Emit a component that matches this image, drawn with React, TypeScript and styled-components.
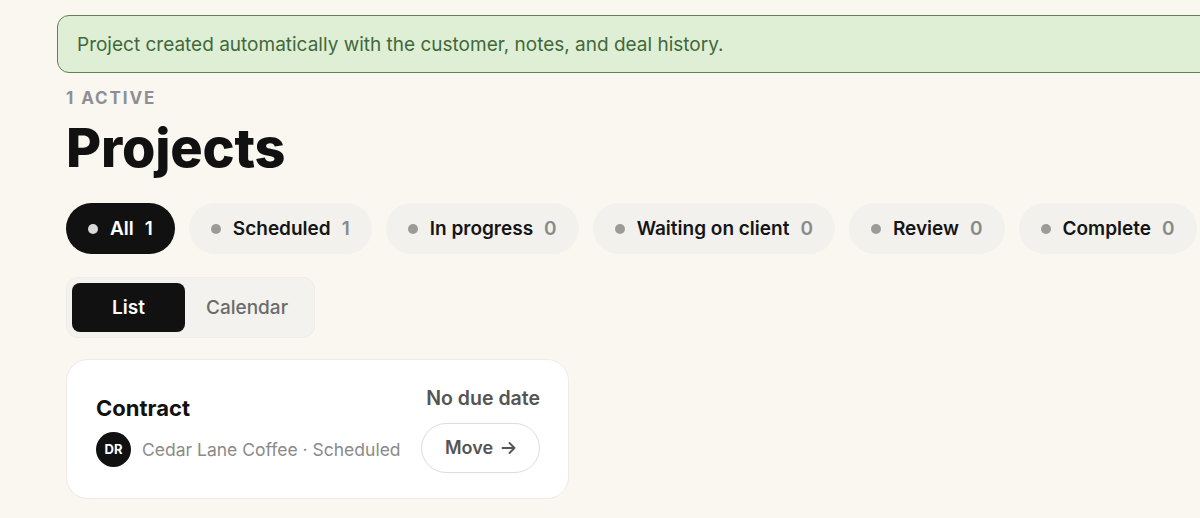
import React from "react";
import styled, { createGlobalStyle } from "styled-components";

const Global = createGlobalStyle`
  html, body { margin: 0; padding: 0; background: #faf7f1; overflow: hidden; }
  body { font-family: Inter, "Noto Sans", sans-serif; color: #111; }
  * { box-sizing: border-box; }
`;

const Page = styled.div`
  width: 1200px;
  height: 518px;
  overflow: hidden;
  background: #faf7f1;
`;

const Inner = styled.div`
  width: 1400px;
  padding: 15px 0 0 66px;
  display: flex;
  flex-direction: column;
`;

const Banner = styled.div`
  margin-left: -9px;
  width: 1220px;
  height: 58px;
  display: flex;
  align-items: center;
  padding-left: 19px;
  background: #deefd6;
  border: 1.5px solid #5f8355;
  border-radius: 12px;
  color: #42683a;
  font-size: 19px;
  font-weight: 400;
`;

const Eyebrow = styled.div`
  margin-top: 15px;
  font-size: 17px;
  font-weight: 700;
  letter-spacing: 1.9px;
  color: #8d8f95;
  text-transform: uppercase;
  line-height: 20px;
`;

const Title = styled.h1`
  margin: 8px 0 0;
  font-size: 54px;
  font-weight: 800;
  letter-spacing: -0.2px;
  line-height: 64px;
  color: #111;
`;

const Pills = styled.div`
  margin-top: 23px;
  display: flex;
  gap: 14px;
`;

const Pill = styled.div<{ $active?: boolean }>`
  flex: none;
  height: 51px;
  display: flex;
  align-items: center;
  padding: 0 22px;
  border-radius: 999px;
  background: ${(p) => (p.$active ? "#111" : "#f2f1ee")};
  color: ${(p) => (p.$active ? "#fff" : "#151515")};
  font-size: 19px;
  font-weight: 600;
`;

const Dot = styled.span<{ $active?: boolean }>`
  width: 10px;
  height: 10px;
  border-radius: 50%;
  background: ${(p) => (p.$active ? "#d9d9d9" : "#9b9b9b")};
  margin-right: 12px;
`;

const Count = styled.span<{ $active?: boolean }>`
  margin-left: 11px;
  color: ${(p) => (p.$active ? "#fff" : "#8a8a8a")};
  font-weight: 600;
`;

const Segment = styled.div`
  margin-top: 23px;
  align-self: flex-start;
  display: flex;
  padding: 5px;
  background: #f3f2ef;
  border: 1px solid #efede8;
  border-radius: 12px;
`;

const SegButton = styled.div<{ $active?: boolean }>`
  height: 49px;
  width: ${(p) => (p.$active ? "113px" : "124px")};
  display: flex;
  align-items: center;
  justify-content: center;
  border-radius: 8px;
  background: ${(p) => (p.$active ? "#111" : "transparent")};
  color: ${(p) => (p.$active ? "#fff" : "#6b6b6b")};
  font-size: 19px;
  font-weight: ${(p) => (p.$active ? 600 : 500)};
`;

const Card = styled.div`
  margin-top: 21px;
  align-self: flex-start;
  width: 503px;
  height: 140px;
  padding: 1px 28px 0 29px;
  display: flex;
  align-items: center;
  justify-content: space-between;
  background: #fff;
  border: 1px solid #efece6;
  border-radius: 22px;
`;

const Left = styled.div`
  display: flex;
  flex-direction: column;
  gap: 11px;
  padding-top: 2px;
`;

const CardTitle = styled.div`
  font-size: 22px;
  font-weight: 700;
  line-height: 26px;
  color: #111;
`;

const Meta = styled.div`
  display: flex;
  align-items: center;
  gap: 11px;
  color: #8a8a8a;
  font-size: 17.5px;
`;

const Avatar = styled.div`
  width: 35px;
  height: 35px;
  border-radius: 50%;
  background: #111;
  color: #fff;
  font-size: 13px;
  font-weight: 700;
  display: flex;
  align-items: center;
  justify-content: center;
`;

const Right = styled.div`
  display: flex;
  flex-direction: column;
  align-items: flex-end;
  gap: 14px;
`;

const Due = styled.div`
  font-size: 19.5px;
  font-weight: 600;
  color: #555;
  line-height: 22px;
`;

const MoveButton = styled.div`
  width: 119px;
  height: 50px;
  border: 1.5px solid #dcdcdc;
  border-radius: 999px;
  display: flex;
  align-items: center;
  justify-content: center;
  gap: 8px;
  font-size: 18px;
  font-weight: 600;
  color: #555;
`;

const filters = [
  { label: "All", count: 1, active: true },
  { label: "Scheduled", count: 1 },
  { label: "In progress", count: 0 },
  { label: "Waiting on client", count: 0 },
  { label: "Review", count: 0 },
  { label: "Complete", count: 0 },
];

export default function App() {
  return (
    <Page>
      <Global />
      <Inner>
        <Banner>Project created automatically with the customer, notes, and deal history.</Banner>
        <Eyebrow>1 Active</Eyebrow>
        <Title>Projects</Title>
        <Pills>
          {filters.map((f) => (
            <Pill key={f.label} $active={f.active}>
              <Dot $active={f.active} />
              {f.label}
              <Count $active={f.active}>{f.count}</Count>
            </Pill>
          ))}
        </Pills>
        <Segment>
          <SegButton $active>List</SegButton>
          <SegButton>Calendar</SegButton>
        </Segment>
        <Card>
          <Left>
            <CardTitle>Contract</CardTitle>
            <Meta>
              <Avatar>DR</Avatar>
              Cedar Lane Coffee · Scheduled
            </Meta>
          </Left>
          <Right>
            <Due>No due date</Due>
            <MoveButton>
              Move
              <svg width="15" height="14" viewBox="0 0 15 14" fill="none" stroke="#555" strokeWidth="1.8" strokeLinecap="round" strokeLinejoin="round">
                <path d="M1.5 7h12M8.5 2l5 5-5 5" />
              </svg>
            </MoveButton>
          </Right>
        </Card>
      </Inner>
    </Page>
  );
}
